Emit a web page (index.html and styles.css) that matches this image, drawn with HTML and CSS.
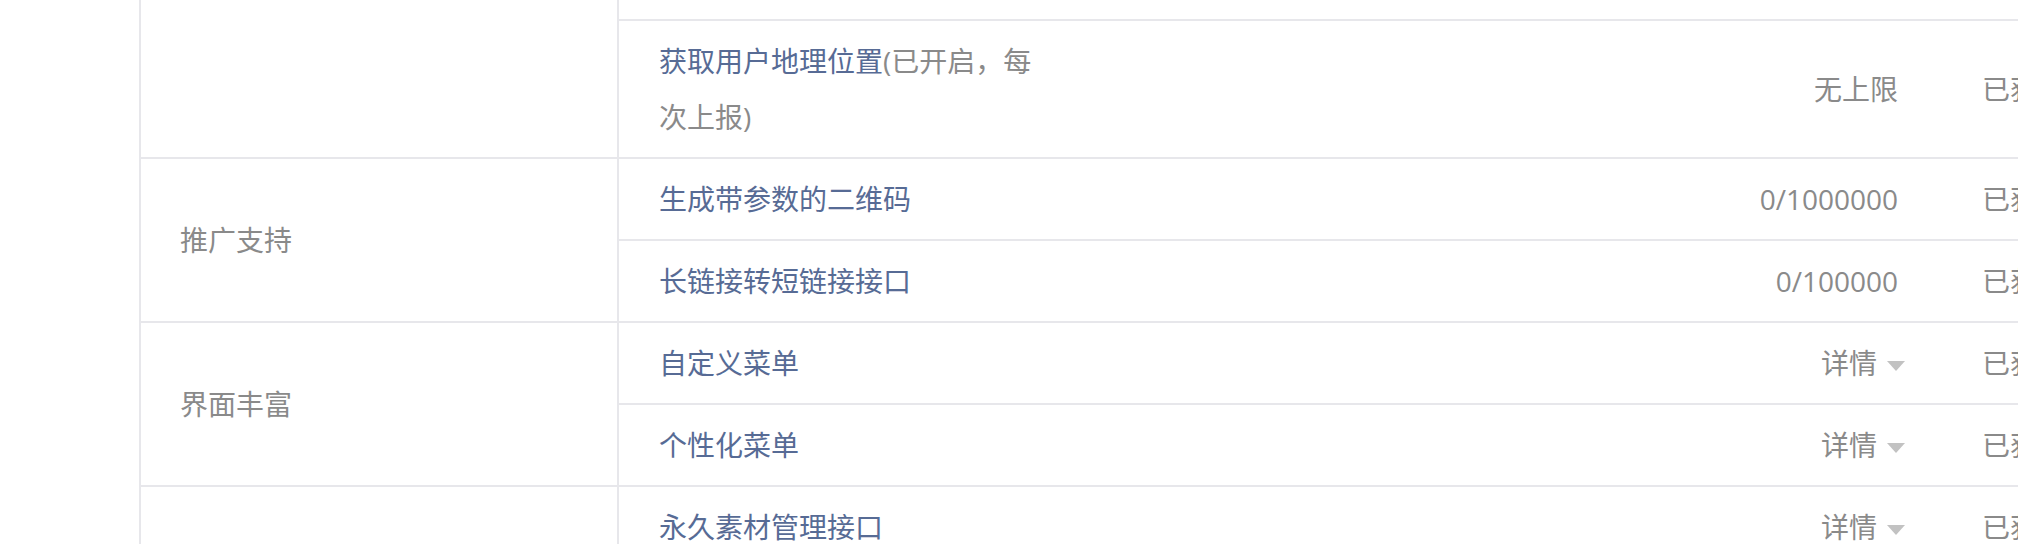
FILE: index.html
```html
<!DOCTYPE html>
<html lang="zh-CN">
<head>
<meta charset="utf-8">
<title>接口权限</title>
<link rel="stylesheet" href="styles.css">
</head>
<body>
<div class="page">
  <table class="perm">
    <colgroup>
      <col class="c-group">
      <col class="c-name">
      <col class="c-quota">
      <col class="c-state">
    </colgroup>
    <tbody>
      <tr class="tail">
        <td class="group group-open" rowspan="2"></td>
        <td></td>
        <td></td>
        <td></td>
      </tr>
      <tr>
        <td class="name"><span class="link">获取用户地理位置</span>(已开启，每次上报)</td>
        <td class="quota">无上限</td>
        <td class="state">已获得</td>
      </tr>
      <tr>
        <td class="group" rowspan="2">推广支持</td>
        <td class="name"><span class="link">生成带参数的二维码</span></td>
        <td class="quota">0/1000000</td>
        <td class="state">已获得</td>
      </tr>
      <tr>
        <td class="name"><span class="link">长链接转短链接接口</span></td>
        <td class="quota">0/100000</td>
        <td class="state">已获得</td>
      </tr>
      <tr>
        <td class="group" rowspan="2">界面丰富</td>
        <td class="name"><span class="link">自定义菜单</span></td>
        <td class="quota">详情<svg class="caret" viewBox="0 0 18 10" width="18" height="10"><path d="M0 0H18L9 10Z"/></svg></td>
        <td class="state">已获得</td>
      </tr>
      <tr>
        <td class="name"><span class="link">个性化菜单</span></td>
        <td class="quota">详情<svg class="caret" viewBox="0 0 18 10" width="18" height="10"><path d="M0 0H18L9 10Z"/></svg></td>
        <td class="state">已获得</td>
      </tr>
      <tr>
        <td class="group" rowspan="3">素材管理</td>
        <td class="name"><span class="link">永久素材管理接口</span></td>
        <td class="quota">详情<svg class="caret" viewBox="0 0 18 10" width="18" height="10"><path d="M0 0H18L9 10Z"/></svg></td>
        <td class="state">已获得</td>
      </tr>
      <tr>
        <td class="name"><span class="link">临时素材管理接口</span></td>
        <td class="quota">详情<svg class="caret" viewBox="0 0 18 10" width="18" height="10"><path d="M0 0H18L9 10Z"/></svg></td>
        <td class="state">已获得</td>
      </tr>
      <tr>
        <td class="name"><span class="link">上传图文消息内的图片</span></td>
        <td class="quota">0/5000</td>
        <td class="state">已获得</td>
      </tr>
    </tbody>
  </table>
</div>
</body>
</html>
```
FILE: styles.css
```css
html, body {
  margin: 0;
  padding: 0;
  background: #ffffff;
  overflow: hidden;
}

.page {
  padding-left: 139px;
  font-family: "Open Sans", "Noto Sans CJK SC", sans-serif;
  font-size: 28px;
  line-height: 56px;
  color: #8a8a8a;
}

.perm {
  border-collapse: separate;
  border-spacing: 0;
  table-layout: fixed;
  width: 1999px;
}

.c-group { width: 480px; }
.c-name { width: 444px; }
.c-quota { width: 875px; }
.c-state { width: 200px; }

.perm td {
  padding: 12px 0;
  border-bottom: 2px solid #e7e7eb;
  vertical-align: middle;
  white-space: normal;
}

.perm .tail td {
  height: 19px;
  padding: 0;
}

.perm td.group {
  padding: 0 40px 0 39px;
  border-left: 2px solid #e7e7eb;
  border-right: 2px solid #e7e7eb;
}

.perm td.name {
  padding-left: 40px;
  padding-right: 20px;
  word-break: break-all;
}

.link {
  color: #576b95;
}

.perm td.quota {
  text-align: right;
  padding-right: 40px;
  white-space: nowrap;
}

.perm td.state {
  padding-left: 44px;
  white-space: nowrap;
}

.caret {
  display: inline-block;
  vertical-align: middle;
  margin-left: 10px;
  margin-right: -7px;
  margin-top: -2px;
  fill: #c2c2c2;
}
```
